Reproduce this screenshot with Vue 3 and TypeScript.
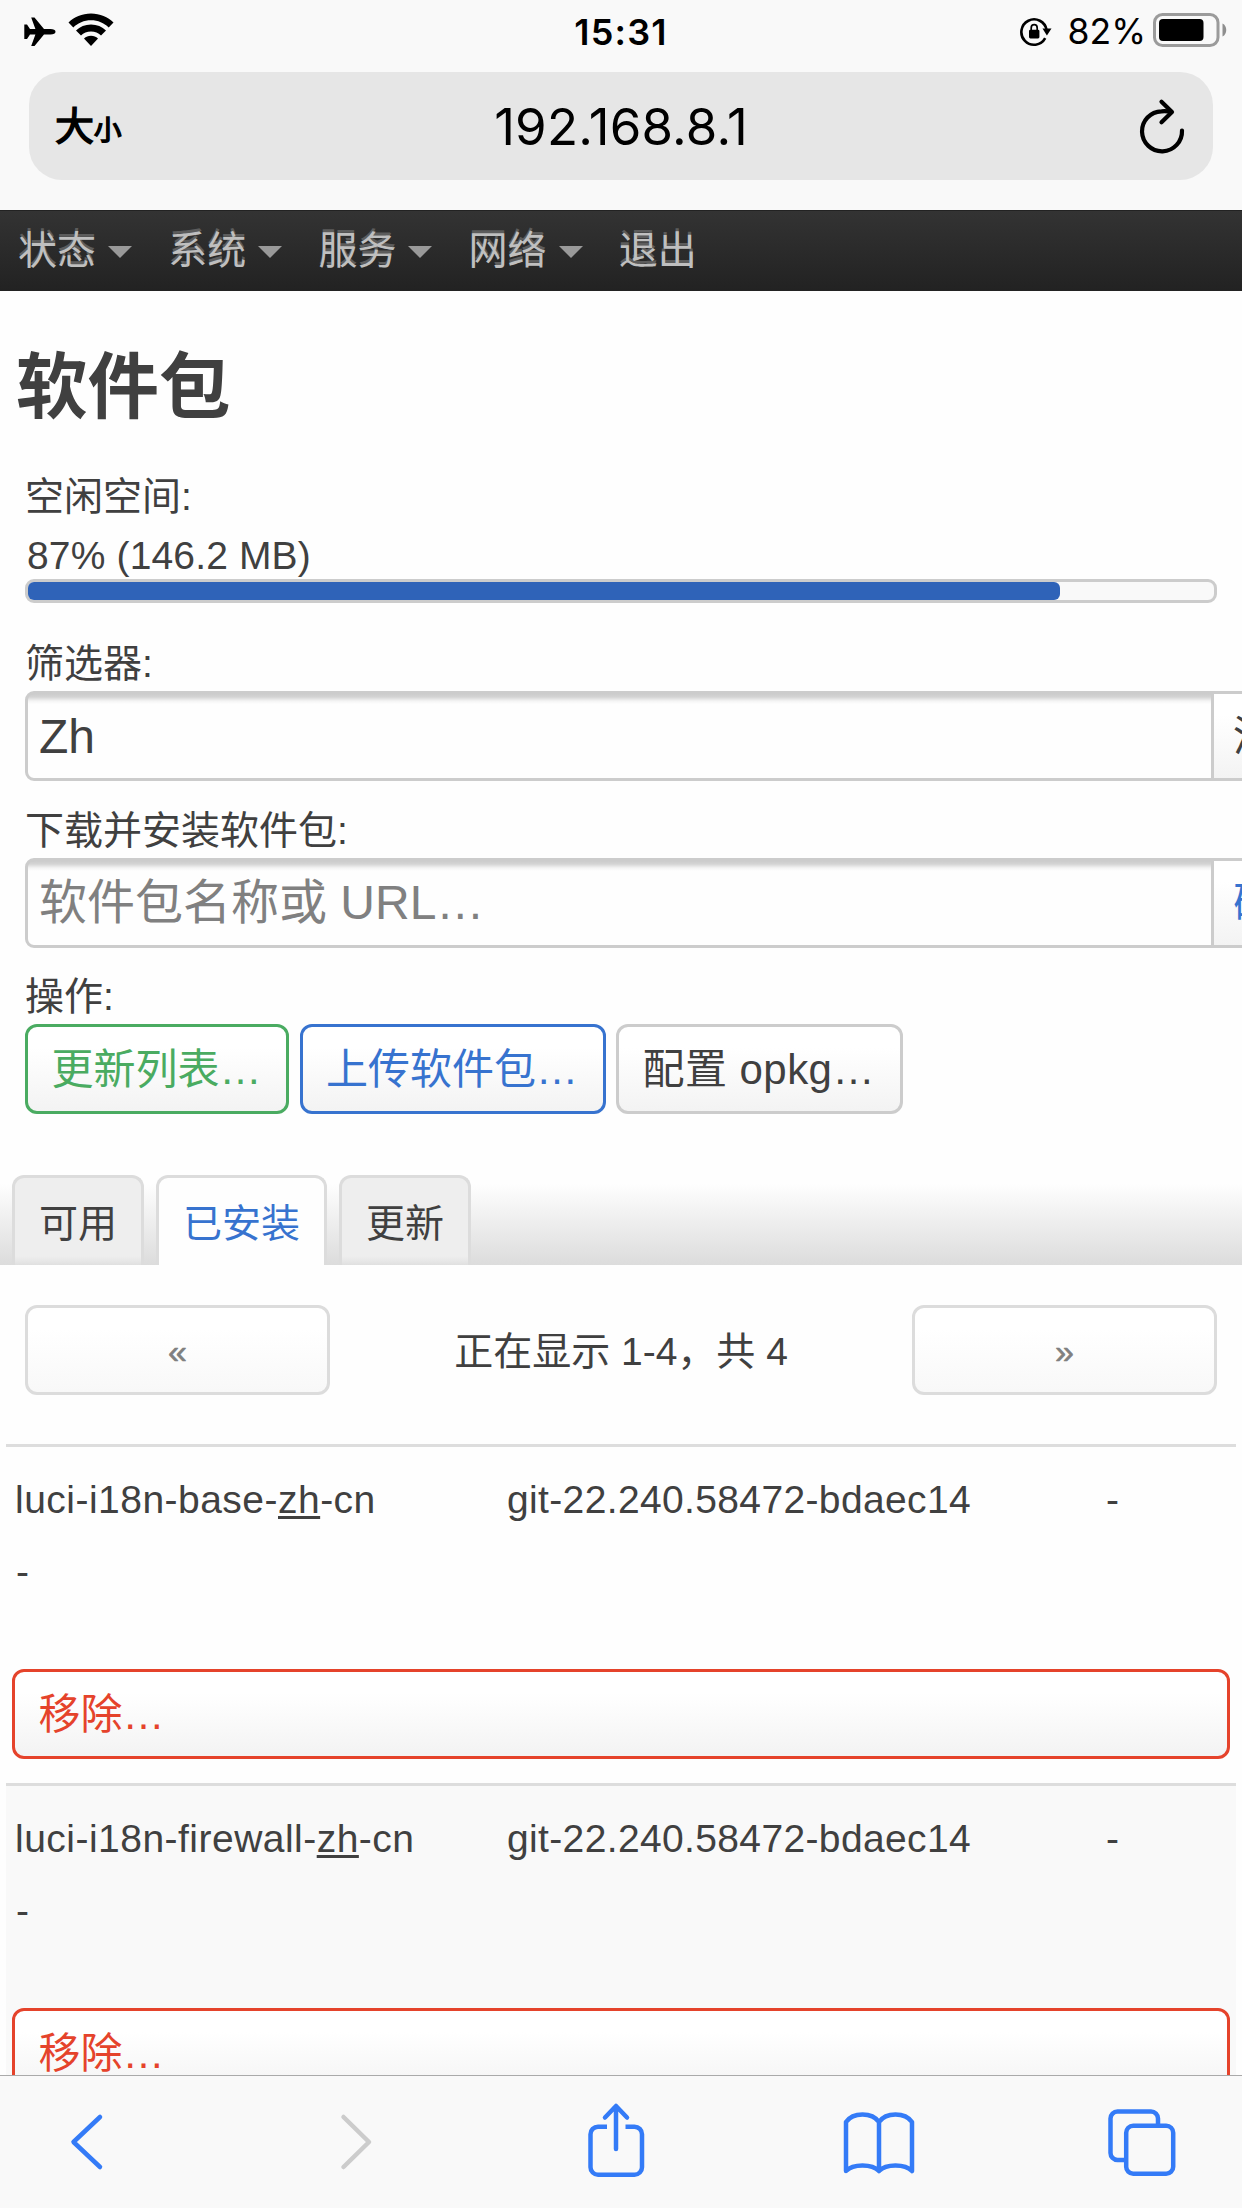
<script setup lang="ts">
interface MenuItem {
  label: string
  dropdown: boolean
}

interface Pkg {
  before: string
  match: string
  after: string
  version: string
}

const menu: MenuItem[] = [
  { label: '状态', dropdown: true },
  { label: '系统', dropdown: true },
  { label: '服务', dropdown: true },
  { label: '网络', dropdown: true },
  { label: '退出', dropdown: false },
]

const freePercent = 87
const tabs: string[] = ['可用', '已安装', '更新']
const activeTab = '已安装'

const packages: Pkg[] = [
  { before: 'luci-i18n-base-', match: 'zh', after: '-cn', version: 'git-22.240.58472-bdaec14' },
  { before: 'luci-i18n-firewall-', match: 'zh', after: '-cn', version: 'git-22.240.58472-bdaec14' },
]
</script>

<template>
  <div class="screen">
    <header class="chrome">
      <div class="status">
        <div class="status-left">
          <svg class="plane" width="34" height="32" viewBox="0 0 34 32">
            <path d="M32.500 15.800c0-1.700-2-2.700-5-2.700h-6.500L11.500 1.500H8.200l4.200 11.600H7L4 8.500H1.300v14.600H4l3-4.600h5.400L8.200 30.100h3.300l9.500-11.600H27.500c3 0 5-1 5-2.700z" />
          </svg>
          <svg class="wifi" width="46" height="34" viewBox="0 0 46 34">
            <path d="M23 0.500C14 0.500 6 4 0.500 9.500l4.800 5C10 10 16 7.300 23 7.300s13 2.700 17.700 7.200l4.800-5C40 4 32 0.500 23 0.500z" />
            <path d="M23 11.500c-6 0-11 2.200-15 6l5 5c2.600-2.500 6-4 10-4s7.400 1.500 10 4l5-5c-4-3.800-9-6-15-6z" />
            <path d="M23 22.800c-2.800 0-5 1-7 2.700l7 7.500 7-7.500c-2-1.700-4.200-2.700-7-2.700z" />
          </svg>
        </div>
        <span class="clock">15:31</span>
        <div class="status-right">
          <svg class="lock" width="32" height="30" viewBox="0 0 32 30">
            <path d="M25.200 21.200A12.700 12.700 0 1 1 26.600 13" fill="none" stroke="#000" stroke-width="2.600" />
            <path d="M22.500 11.500h9l-4.600 7z" />
            <rect x="9" y="12.700" width="10.400" height="8.800" rx="1.400" />
            <path d="M11.200 13.500v-2.600a3 3.200 0 0 1 6 0v2.600" fill="none" stroke="#000" stroke-width="1.700" />
          </svg>
          <span class="percent">82%</span>
          <svg class="battery" width="75" height="34" viewBox="0 0 75 34">
            <rect x="1.500" y="1.500" width="63.500" height="31" rx="8" fill="none" stroke="#9b9b9b" stroke-width="3" />
            <rect x="6" y="6" width="44.500" height="22" rx="4" />
            <path d="M69.500 10.500c5 2.200 5 10.800 0 13z" fill="#8f8f8f" />
          </svg>
        </div>
      </div>
      <div class="address">
        <span class="size"><span class="big">大</span><span class="small">小</span></span>
        <span class="host">192.168.8.1</span>
        <svg class="reload" width="48" height="68" viewBox="0 0 48 68">
          <g fill="none" stroke="#000" stroke-width="4.200" stroke-linecap="round" stroke-linejoin="round">
            <path d="M43 38.500A20 20 0 1 1 22.500 19.300q5-.4 9.500.5" />
            <path d="M22.500 9.800L33 20 22.500 30.300" />
          </g>
        </svg>
      </div>
    </header>

    <nav class="menu">
      <a v-for="item in menu" :key="item.label" class="menu-item">
        {{ item.label }}<i v-if="item.dropdown" class="caret"></i>
      </a>
    </nav>

    <main class="page">
      <h1>软件包</h1>

      <section class="controls">
        <label>空闲空间:</label>
        <div class="free">87% (146.2 MB)</div>
        <div class="bar"><div class="bar-fill" :style="{ width: freePercent + '%' }"></div></div>

        <label class="lbl-filter">筛选器:</label>
        <div class="field">
          <div class="input">Zh</div>
          <div class="addon">清除</div>
        </div>

        <label class="lbl-field">下载并安装软件包:</label>
        <div class="field">
          <div class="input placeholder">软件包名称或 URL…</div>
          <div class="addon action">确认</div>
        </div>

        <label class="lbl-actions">操作:</label>
        <div class="buttons">
          <div class="btn green">更新列表…</div>
          <div class="btn blue">上传软件包…</div>
          <div class="btn conf">配置 opkg…</div>
        </div>
      </section>

      <div class="tabs">
        <div v-for="tab in tabs" :key="tab" class="tab" :class="{ active: tab === activeTab }">{{ tab }}</div>
      </div>

      <div class="pager">
        <div class="page-btn">«</div>
        <div class="page-text">正在显示 1-4，共 4</div>
        <div class="page-btn">»</div>
      </div>

      <div class="table">
        <div v-for="pkg in packages" :key="pkg.before" class="row">
          <div class="cells">
            <span class="name">{{ pkg.before }}<u>{{ pkg.match }}</u>{{ pkg.after }}</span>
            <span class="version">{{ pkg.version }}</span>
            <span class="size-cell">-</span>
          </div>
          <div class="desc">-</div>
          <div class="btn remove">移除…</div>
        </div>
      </div>
    </main>

    <footer class="toolbar">
      <svg width="1242" height="132" viewBox="0 0 1242 132">
        <g fill="none" stroke="#347bf7" stroke-width="4.500" stroke-linecap="round" stroke-linejoin="round">
          <path d="M100 41L73.500 66 100 91" />
          <path d="M343.500 41L369 66 343.500 91" stroke="#cccccc" />
          <path d="M616 73V31M605 41.500L616 30l11 11.500" />
          <path d="M607 50.700h-9a7.500 7.500 0 0 0-7.500 7.500v33a7.500 7.500 0 0 0 7.500 7.500h36.500a7.500 7.500 0 0 0 7.500-7.500v-33a7.500 7.500 0 0 0-7.500-7.500h-9" stroke-linecap="butt" />
          <path d="M879 46c-7-10-26-10-33 0v49c7-7.500 26-7.500 33 0 7-7.500 26-7.500 33 0V46c-7-10-26-10-33 0zv49" />
          <path d="M1124 84h-6.500a7 7 0 0 1-7-7V42.500a7 7 0 0 1 7-7h33.500a7 7 0 0 1 7 7V49" stroke-linecap="butt" />
          <rect x="1126.200" y="49.700" width="47" height="48" rx="7" />
        </g>
      </svg>
    </footer>
  </div>
</template>

<style>
html,
body {
  overflow: hidden;
}
</style>

<style scoped>
.screen {
  width: 1242px;
  height: 2208px;
  overflow: hidden;
  display: flex;
  flex-direction: column;
  background: #fefefe;
  color: #404040;
  font-family: 'Liberation Sans', 'Noto Sans CJK SC', sans-serif;
  font-size: 39px;
  line-height: 54px;
}

.chrome {
  flex: none;
  height: 210px;
  background: #f9f9f9;
  color: #000;
  font-family: Inter, 'Noto Sans CJK SC', sans-serif;
}

.status {
  height: 72px;
  display: grid;
  grid-template-columns: 1fr auto 1fr;
}

.status-left {
  display: flex;
  align-items: flex-start;
  padding-left: 23px;
}

.plane {
  margin-top: 16px;
}

.wifi {
  margin: 13px 0 0 11px;
}

.clock {
  margin-top: 5px;
  font-size: 36px;
  font-weight: 600;
  letter-spacing: 1.200px;
}

.status-right {
  display: flex;
  justify-content: flex-end;
  align-items: flex-start;
  padding-right: 14px;
}

.lock {
  margin: 17px 16px 0 0;
}

.percent {
  margin-top: 5px;
  font-size: 35.500px;
}

.battery {
  margin: 13px 0 0 7px;
}

.address {
  height: 108px;
  margin: 0 29px;
  border-radius: 33px;
  background: #e6e6e6;
  display: grid;
  grid-template-columns: 1fr auto 1fr;
  align-items: center;
}

.size {
  padding: 4px 0 0 26px;
  display: flex;
  align-items: baseline;
}

.big {
  font-size: 39px;
  -webkit-text-stroke: 1.500px #000;
}

.small {
  font-size: 27.500px;
  -webkit-text-stroke: 1.500px #000;
}

.host {
  padding-top: 2px;
  font-size: 51px;
  letter-spacing: 0.200px;
}

.reload {
  justify-self: end;
  margin-right: 26px;
}

.menu {
  flex: none;
  height: 81px;
  box-sizing: border-box;
  border-top: 1px solid #222;
  background: linear-gradient(#333, #222);
  color: #bfbfbf;
  display: flex;
  align-items: center;
  padding-left: 18px;
  text-shadow: 0 -3px 0 #5c5c5c;
}

.menu-item {
  display: flex;
  align-items: center;
  margin-right: 36.200px;
}

.caret {
  margin: 2px 0 0 12px;
  border-left: 12px solid transparent;
  border-right: 12px solid transparent;
  border-top: 12px solid #999;
}

.page {
  flex: none;
  height: 1784px;
  overflow: hidden;
}

h1 {
  margin: 42px 0 0 16px;
  font-size: 71.500px;
  font-weight: 700;
  line-height: 108px;
}

.controls {
  margin-left: 25px;
}

label {
  display: block;
  height: 54px;
  margin-top: 27px;
  line-height: 57px;
}

.free {
  height: 54px;
  margin: 6px 0 0 2px;
  line-height: 56px;
  letter-spacing: 0.150px;
}

.bar {
  box-sizing: border-box;
  width: 1192px;
  height: 24px;
  margin-top: -3px;
  border: 3px solid #ccc;
  border-radius: 9px;
  background: #f9f9f9;
}

.bar-fill {
  height: 18px;
  border-radius: 6px;
  background: #2f63b8;
}

.lbl-filter {
  margin-top: 31px;
  line-height: 59px;
}

.lbl-field {
  margin-top: 20px;
  line-height: 59px;
}

.lbl-actions {
  margin-top: 20px;
}

.field {
  display: flex;
  margin-top: 3px;
  height: 90px;
}

.input {
  box-sizing: border-box;
  flex: none;
  width: 1189px;
  border: 3px solid #ccc;
  border-radius: 9px 0 0 9px;
  background: linear-gradient(#ccc, #d4d4d4 3px, #f4f4f4 7px, #fefefe 10px);
  padding-left: 11px;
  font-size: 48px;
  line-height: 86px;
}

.placeholder {
  color: #808080;
  line-height: 84px;
}

.addon {
  flex: none;
  box-sizing: border-box;
  width: 126px;
  border: 3px solid #ccc;
  border-left: 0;
  padding-left: 19px;
  font-size: 42px;
  line-height: 86px;
  background: linear-gradient(#fff 25%, #f3f3f3);
}

.action {
  color: #3773cf;
}

.buttons {
  display: flex;
  gap: 10.500px;
  margin-top: 2px;
}

.btn {
  box-sizing: border-box;
  height: 90px;
  border: 3px solid #ccc;
  border-radius: 12px;
  padding: 0 24.500px 0 23.500px;
  font-size: 42px;
  line-height: 86px;
  background: linear-gradient(#fff 25%, #f3f3f3);
}

.green {
  color: #4aab61;
  border-color: #4aab61;
}

.blue {
  color: #3773cf;
  border-color: #3773cf;
}

.conf {
  width: 287px;
  letter-spacing: 0.450px;
}

.tabs {
  height: 90px;
  margin-top: 61px;
  padding-left: 12px;
  display: flex;
  gap: 12px;
  background: linear-gradient(#fefefe 10%, #dcdcdc);
}

.tab {
  box-sizing: border-box;
  padding: 6px 24px 0;
  line-height: 80px;
  border: 3px solid #dcdcdc;
  border-bottom: 0;
  border-radius: 12px 12px 0 0;
  background: linear-gradient(#eee 90%, #e0e0e0);
}

.active {
  background: #fefefe;
  color: #3773cf;
}

.pager {
  display: flex;
  align-items: center;
  justify-content: space-between;
  margin: 40px 25px 0;
}

.page-text {
  padding-top: 3px;
}

.page-btn {
  box-sizing: border-box;
  width: 305px;
  height: 90px;
  border: 3px solid #dcdcdc;
  border-radius: 12px;
  color: #808080;
  text-align: center;
  font-size: 34px;
  line-height: 86px;
  -webkit-text-stroke: 0.600px #808080;
  background: linear-gradient(#fff 25%, #f8f8f8);
}

.table {
  margin: 49px 6px 0;
}

.row {
  box-sizing: border-box;
  height: 339px;
  border-top: 3px solid #ddd;
  padding: 26px 6px 0;
}

.row:nth-child(even) {
  background: #f9f9f9;
}

.cells {
  display: flex;
  padding-left: 3px;
}

.name {
  width: 492px;
  letter-spacing: 0.480px;
}

.name u {
  text-decoration-thickness: 3px;
  text-underline-offset: 3px;
}

.version {
  width: 599px;
  letter-spacing: 0.360px;
}

.desc {
  padding: 18px 0 0 4px;
}

.remove {
  margin-top: 70px;
  color: #e5432b;
  border-color: #e5432b;
}

.toolbar {
  flex: none;
  height: 133px;
  box-sizing: border-box;
  border-top: 1px solid #aaa;
  background: #f9f9f9;
}

.toolbar svg {
  display: block;
}
</style>
